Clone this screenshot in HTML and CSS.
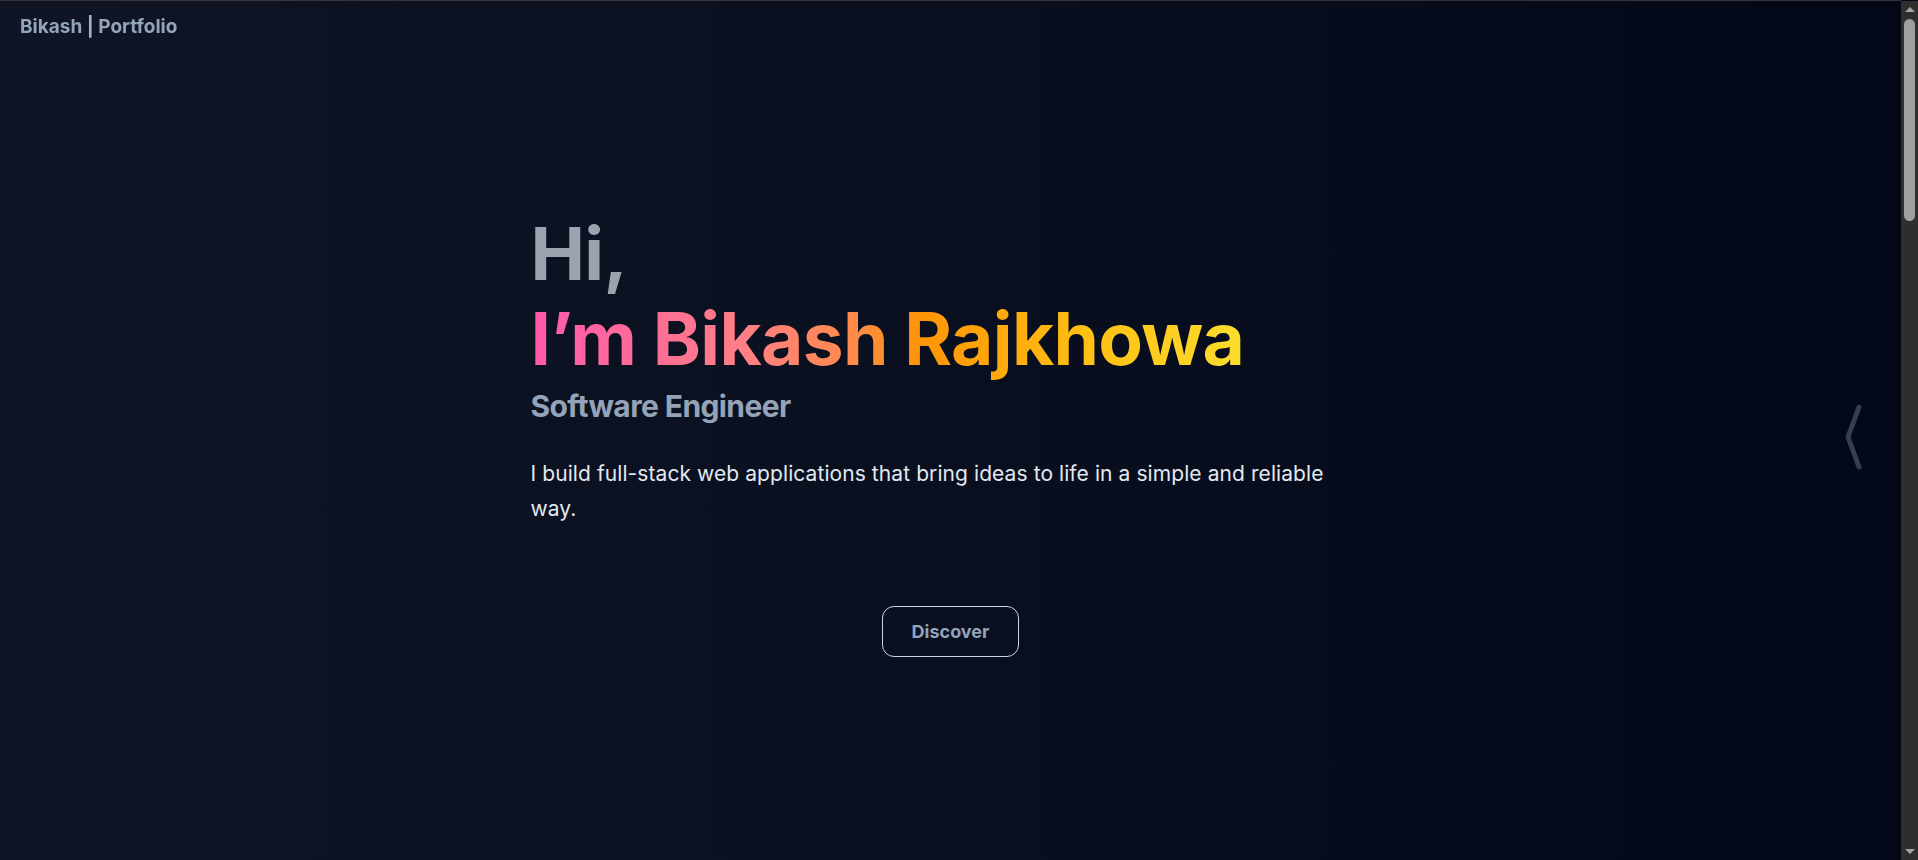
FILE: index.html
```html
<!DOCTYPE html>
<html lang="en">
<head>
<meta charset="utf-8">
<title>Bikash | Portfolio</title>
<link rel="stylesheet" href="styles.css">
</head>
<body>
<header class="nav">
  <a class="brand" href="#">Bikash <span class="bar">|</span> Portfolio</a>
</header>
<main>
  <section class="hero">
    <div class="hero-inner">
      <h1 class="title">
        <span class="hi">Hi,</span>
        <span class="name">I’m Bikash Rajkhowa</span>
      </h1>
      <h2 class="role">Software Engineer</h2>
      <p class="intro">I build full-stack web applications that bring ideas to life in a simple and reliable way.</p>
      <div class="cta">
        <a class="btn" href="#about">Discover</a>
      </div>
    </div>
    <button class="side-toggle" aria-label="Open menu">
      <svg width="22" height="72" viewBox="0 0 22 72" fill="none">
        <path d="M16 6 L5 36 L16 66" stroke="#363d4e" stroke-width="5" stroke-linecap="round" stroke-linejoin="round"/>
      </svg>
    </button>
  </section>
  <section class="section" id="about"></section>
  <section class="section"></section>
  <section class="section short"></section>
</main>
<div class="scroll-rail" aria-hidden="true">
  <span class="arrow up"></span>
  <span class="thumb"></span>
  <span class="arrow down"></span>
</div>
</body>
</html>
```
FILE: styles.css
```css
html {
  color-scheme: dark;
  background: #020617;
}
body {
  margin: 0 17px 0 0;
  font-family: Inter, "Noto Sans", sans-serif;
  background: linear-gradient(90deg, #0f1524 0%, #0a1020 45%, #030818 100%);
  color: #e2e8f0;
  border-top: 1px solid #37333b;
}
.nav {
  position: fixed;
  top: 1px;
  left: 0;
  padding: 14px 20px;
  z-index: 10;
}
.brand {
  font-size: 19px;
  font-weight: 700;
  color: #94a3b8;
  text-decoration: none;
}
.bar {
  color: #a3aec0;
}
.hero {
  position: relative;
  height: 859px;
  display: flex;
  align-items: center;
  justify-content: center;
}
.hero-inner {
  width: 840px;
  margin-top: 6px;
}
.title {
  margin: 0;
  font-size: 73px;
  line-height: 85px;
  font-weight: 700;
  letter-spacing: -0.7px;
}
.title span {
  display: block;
}
.hi {
  color: #9ca3af;
}
.name {
  width: max-content;
  background: linear-gradient(90deg, #ff58ab 0%, #ff7f86 30%, #ff8a4a 45%, #ff9506 55%, #ffc014 78%, #fddd2c 100%);
  -webkit-background-clip: text;
  background-clip: text;
  color: transparent;
}
.role {
  margin: 7px 0 0;
  font-size: 30px;
  line-height: 36px;
  font-weight: 700;
  color: #94a3b8;
  letter-spacing: -0.6px;
}
.intro {
  margin: 32px 0 0;
  max-width: 815px;
  font-size: 21px;
  line-height: 35px;
  letter-spacing: 0.08px;
  color: #e2e8f0;
}
.cta {
  display: flex;
  justify-content: center;
  margin-top: 80px;
}
.btn {
  display: inline-flex;
  align-items: center;
  justify-content: center;
  width: 137px;
  height: 51px;
  box-sizing: border-box;
  border: 1px solid #cbd5e1;
  border-radius: 12px;
  font-size: 18px;
  font-weight: 700;
  color: #94a3b8;
  text-decoration: none;
}
.side-toggle {
  position: absolute;
  right: 36px;
  top: 400px;
  background: none;
  border: 0;
  padding: 0;
  cursor: pointer;
}
.section {
  height: 900px;
}
.section.short {
  height: 850px;
}
.scroll-rail {
  position: fixed;
  top: 1px;
  right: 0;
  width: 17px;
  height: calc(100vh - 1px);
  background: #2e2e2e;
  display: flex;
  flex-direction: column;
  align-items: center;
}
.arrow {
  width: 0;
  height: 0;
  border-left: 5px solid transparent;
  border-right: 5px solid transparent;
}
.arrow.up {
  margin-top: 6px;
  border-bottom: 5px solid #a3a3a3;
}
.arrow.down {
  margin-top: auto;
  margin-bottom: 6px;
  border-top: 5px solid #a3a3a3;
}
.thumb {
  margin-top: 7px;
  width: 11px;
  height: 202px;
  border-radius: 6px;
  background: #9f9f9f;
}
```
